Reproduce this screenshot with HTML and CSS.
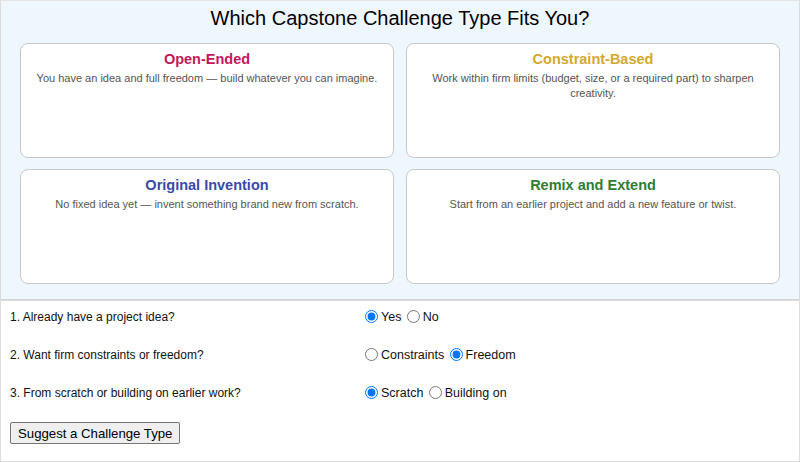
FILE: index.html
```html
<!DOCTYPE html>
<html lang="en">
<head>
    <meta charset="UTF-8">
    <title>Capstone Challenge</title>
    <link rel="stylesheet" href="styles.css">
</head>
<body>
    <div class="page">
        <div class="panel-top">
            <h1>Which Capstone Challenge Type Fits You?</h1>
            <div class="cards">
                <div class="card">
                    <h3 class="open">Open-Ended</h3>
                    <p>You have an idea and full freedom — build whatever you can imagine.</p>
                </div>
                <div class="card">
                    <h3 class="constraint">Constraint-Based</h3>
                    <p>Work within firm limits (budget, size, or a required part) to sharpen creativity.</p>
                </div>
                <div class="card">
                    <h3 class="original">Original Invention</h3>
                    <p>No fixed idea yet — invent something brand new from scratch.</p>
                </div>
                <div class="card">
                    <h3 class="remix">Remix and Extend</h3>
                    <p>Start from an earlier project and add a new feature or twist.</p>
                </div>
            </div>
        </div>
        <div class="panel-quiz">
            <div class="q-row">
                <span>1. Already have a project idea?</span>
                <span>
                    <label><input type="radio" name="q1" checked>Yes</label>
                    <label><input type="radio" name="q1">No</label>
                </span>
            </div>
            <div class="q-row">
                <span>2. Want firm constraints or freedom?</span>
                <span>
                    <label><input type="radio" name="q2">Constraints</label>
                    <label><input type="radio" name="q2" checked>Freedom</label>
                </span>
            </div>
            <div class="q-row">
                <span>3. From scratch or building on earlier work?</span>
                <span>
                    <label><input type="radio" name="q3" checked>Scratch</label>
                    <label><input type="radio" name="q3">Building on</label>
                </span>
            </div>
            <button class="btn-suggest">Suggest a Challenge Type</button>
        </div>
    </div>
</body>
</html>
```

FILE: styles.css
```css
body {
    margin: 0;
    font-family: "Liberation Sans", Arial, sans-serif;
}
.page {
    width: 800px;
    height: 462px;
    box-sizing: border-box;
    border: 1px solid #dcdcdc;
    border-top-color: #e4e4e4;
    overflow: hidden;
}
.panel-top {
    background: #eef6fe;
    padding: 6px 19px 15px 19px;
    border-bottom: 2px solid #d8d8d8;
}
.panel-top h1 {
    margin: 0 0 13px 0;
    font-size: 20px;
    font-weight: normal;
    line-height: 23px;
    text-align: center;
    color: #000;
}
.cards {
    display: grid;
    grid-template-columns: 1fr 1fr;
    gap: 11px 12px;
}
.card {
    height: 115px;
    box-sizing: border-box;
    background: #fff;
    border: 1px solid #c8c8c8;
    border-radius: 8px;
    padding: 7px 10px;
    text-align: center;
}
.card h3 {
    margin: 0 0 3px 0;
    font-size: 14.5px;
    line-height: 17px;
}
.card p {
    margin: 0;
    font-size: 11px;
    line-height: 15px;
    color: #555;
}
.card .open {
    color: #c2185b;
}
.card .constraint {
    color: #d4a82e;
}
.card .original {
    color: #3949ab;
}
.card .remix {
    color: #2e7d32;
}
.panel-quiz {
    padding: 5px 9px;
    font-size: 12px;
    color: #111;
}
.q-row {
    display: grid;
    grid-template-columns: 353px auto;
    align-items: center;
    height: 22px;
    margin-bottom: 16px;
}
.q-row label {
    font-size: 12.5px;
}
.q-row input {
    width: 13px;
    height: 13px;
    margin: 0 3px 0 2px;
    vertical-align: -2px;
}
.btn-suggest {
    margin-top: 2px;
    font-family: "Liberation Sans", Arial, sans-serif;
    font-size: 13.2px;
    height: 22px;
    padding: 0 7px;
    background: #efefef;
    border: 1px solid #767676;
    border-radius: 2px;
    color: #000;
}
```
